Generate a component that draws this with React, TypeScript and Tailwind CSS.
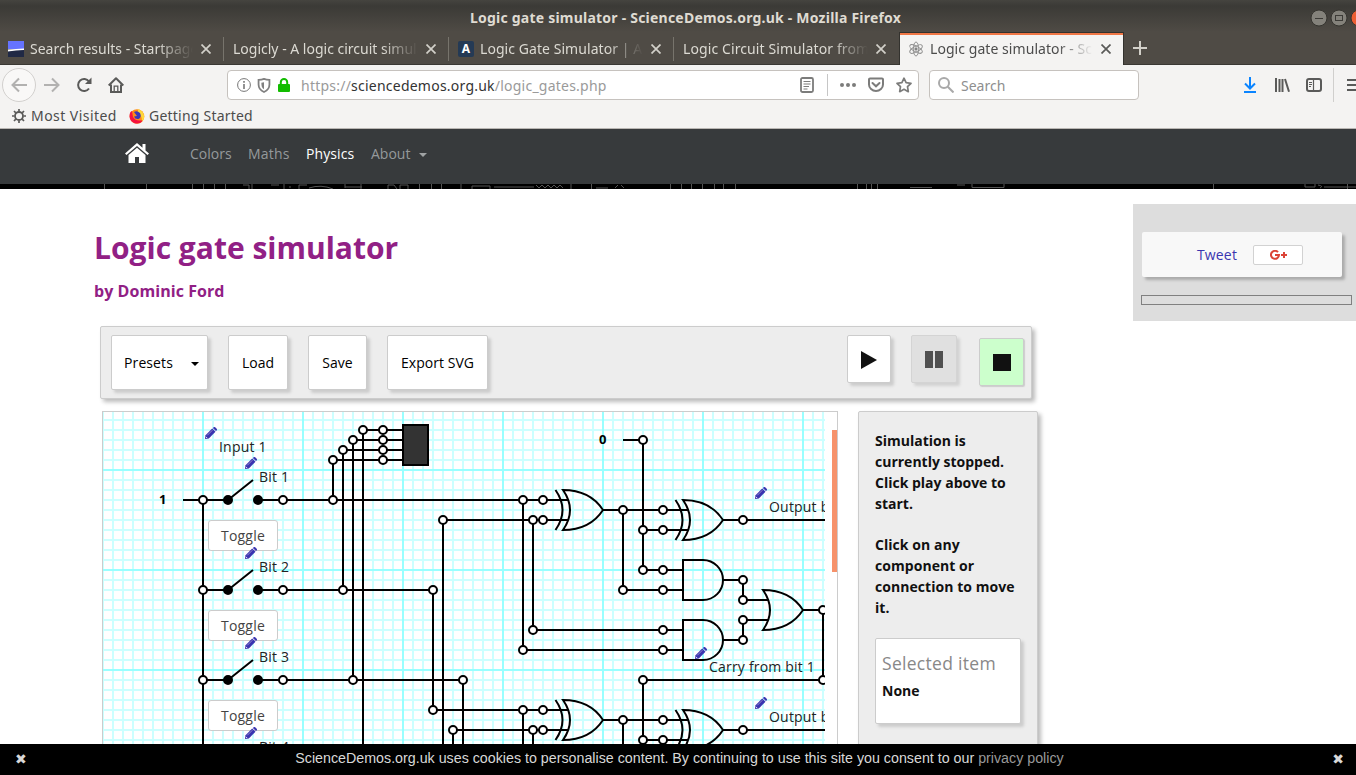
import React from "react";

const ui = "font-['Noto_Sans',sans-serif]";

type Pt = [number, number];

const WIRES = [
  "M183 500H228 M258 500H568 M203 500V744 M203 590H228 M258 590H433V710H568 M203 680H228 M258 680H463V744",
  "M228 500L253 480 M228 590L253 570 M228 680L253 660",
  "M363 744V430H403 M353 680V440H403 M343 590V450H403 M333 500V460H403",
  "M443 744V520H568 M523 500V650H683 M533 520V630H683",
  "M453 744V730H568 M523 710V744 M533 730V744",
  "M603 510H688 M623 510V590H683 M623 440H643V570H683 M643 530H688 M723 520H825",
  "M723 580H743V600H769 M723 640H743V620H769 M803 610H823V680H643V740H688",
  "M603 720H688 M623 720V744 M723 730H825",
];

const NODES: Pt[] = [
  [203, 500], [283, 500], [333, 500], [523, 500], [543, 500],
  [203, 590], [283, 590], [343, 590], [433, 590],
  [203, 680], [283, 680], [353, 680], [463, 680],
  [363, 430], [383, 430], [353, 440], [383, 440], [343, 450], [383, 450], [333, 460], [383, 460],
  [443, 520], [533, 520], [543, 520], [523, 650], [533, 630], [663, 630], [663, 650],
  [433, 710], [523, 710], [543, 710], [453, 730], [533, 730], [543, 730],
  [643, 440], [623, 510], [663, 510], [643, 530], [663, 530], [743, 520],
  [643, 570], [663, 570], [623, 590], [663, 590], [743, 580], [743, 600], [743, 620], [743, 640],
  [823, 610], [823, 680], [643, 680], [643, 740], [663, 740], [623, 720], [663, 720], [743, 730],
];

const DOTS: Pt[] = [[228, 500], [258, 500], [228, 590], [258, 590], [228, 680], [258, 680]];
const XORS: Pt[] = [[563, 490], [683, 500], [563, 700], [683, 710]];
const ANDS: Pt[] = [[683, 560], [683, 620]];
const PENCILS: Pt[] = [[205, 427], [245, 457], [245, 547], [245, 637], [245, 727], [755, 487], [695, 647], [755, 697]];
const LABELS: [number, number, string][] = [
  [219, 452, "Input 1"], [259, 482, "Bit 1"], [259, 572, "Bit 2"], [259, 662, "Bit 3"], [259, 752, "Bit 4"],
  [769, 512, "Output bit 1"], [709, 672, "Carry from bit 1"], [769, 722, "Output bit 2"],
];

const orPath = "M0 0Q14 20 0 40Q27 40 40 20Q27 0 0 0Z";

function Pencil() {
  return (
    <svg viewBox="0 0 12 12" className="block h-3 w-3">
      <path d="M0 12L.5 8.200L7.200 1.500L10.500 4.800L3.800 11.500Z" fill="#3a35b0" />
      <path d="M7.800 .9L8.700 .2Q9.500-.3 10.200.3L11.700 1.800Q12.300 2.500 11.800 3.200L11 4.100Z" fill="#3a35b0" />
      <path d="M2.200 8.400L7.400 3.200" stroke="#a79ad4" strokeWidth=".8" />
      <path d="M1 9.900L2.100 11" stroke="#fff" strokeWidth=".9" />
    </svg>
  );
}

function Circuit() {
  return (
    <div className="relative h-[332px] w-[722px] overflow-hidden">
      <svg viewBox="103 412 722 332" className="absolute inset-0 h-[332px] w-[722px]" fill="none">
        <g strokeWidth="2" stroke="#ccffff">
          {Array.from({ length: 73 }, (_, i) => <path key={i} d={`M${103 + i * 10} 412V744`} />)}
          {Array.from({ length: 33 }, (_, i) => <path key={i} d={`M103 ${420 + i * 10}H825`} />)}
        </g>
        <path strokeWidth="2" stroke="#99ffff" d="M203 412V744M303 412V744M403 412V744M503 412V744M603 412V744M703 412V744M803 412V744M103 470H825M103 570H825M103 670H825" />
        <g stroke="#000" strokeWidth="2">
          {WIRES.map((d) => <path key={d} d={d} />)}
          {XORS.map(([x, y]) => (
            <g key={`${x}-${y}`} transform={`translate(${x} ${y})`}>
              <path d={orPath} />
              <path d="M-7.500 0Q6.500 20 -7.500 40" />
            </g>
          ))}
          <path d={orPath} transform="translate(763 590)" />
          {ANDS.map(([x, y]) => <path key={y} d={`M${x} ${y}h20a20 20 0 0 1 0 40h-20z`} />)}
          <rect x="403" y="425" width="25" height="40" fill="#333" />
          {NODES.map(([x, y]) => <circle key={`${x}-${y}`} cx={x} cy={y} r="4" fill="#fff" />)}
          {DOTS.map(([x, y]) => <circle key={`${x}-${y}`} cx={x} cy={y} r="4" fill="#000" />)}
        </g>
        <g fill="#222" className="font-['Open_Sans',sans-serif] text-[14px] tracking-[0.2px]">
          {LABELS.map(([x, y, t]) => <text key={t} x={x} y={y}>{t}</text>)}
        </g>
        <g fill="#000" className="font-['Open_Sans',sans-serif] text-[13px] font-bold">
          <text x="159" y="504">1</text>
          <text x="599" y="444">0</text>
        </g>
      </svg>
      {[520, 610, 700].map((y) => (
        <button key={y} className="absolute left-[105px] h-[31px] w-[70px] rounded-[3px] border border-[#ccc] bg-white text-[14px] leading-[29px] tracking-[0.2px] text-[#444]" style={{ top: y - 412 }}>
          Toggle
        </button>
      ))}
      {PENCILS.map(([x, y]) => (
        <div key={`${x}-${y}`} className="absolute" style={{ left: x - 103, top: y - 412 }}><Pencil /></div>
      ))}
    </div>
  );
}

function CloseX({ color }: { color: string }) {
  return (
    <svg viewBox="0 0 10 10" className="ml-[8px] h-[10px] w-[10px] shrink-0" stroke={color} strokeWidth="1.7">
      <path d="M.5.5L9.500 9.500M9.500.5L.5 9.500" />
    </svg>
  );
}

function Tab({ title, icon, active, spacing, last }: { title: string; icon?: React.ReactNode; active?: boolean; spacing: string; last?: boolean }) {
  return (
    <div className={`relative flex h-[33px] w-[225px] shrink-0 items-center pl-[8px] ${active ? "-ml-px border-x border-[#33322e] bg-[#f4f3f2] pr-[12px]" : "border-b border-[#3a3833] pr-[14px] pt-px"}`}>
      {active && <div className="absolute inset-x-0 top-0 h-[3px] border-t border-[#33322e] bg-[#f07746]" />}
      {icon && <div className="mr-[6px] h-4 w-4 shrink-0">{icon}</div>}
      <div className={`min-w-0 flex-1 overflow-hidden whitespace-nowrap pt-px text-[14px] leading-[22px] [mask-image:linear-gradient(to_left,transparent,black_36px)] ${spacing} ${active ? "text-[#4c4c4c]" : "text-[#dcdad3]"}`}>{title}</div>
      <CloseX color={active ? "#5a5a58" : "#d2d0c9"} />
      {!active && !last && <div className="absolute right-px top-[5px] h-6 w-px bg-[#77746c]" />}
    </div>
  );
}

function Atom() {
  return (
    <svg viewBox="0 0 16 16" className="h-4 w-4" fill="none" stroke="#8c8c8c" strokeWidth=".9">
      <ellipse cx="8" cy="8" rx="2.700" ry="7" />
      <ellipse cx="8" cy="8" rx="2.700" ry="7" transform="rotate(60 8 8)" />
      <ellipse cx="8" cy="8" rx="2.700" ry="7" transform="rotate(-60 8 8)" />
      <circle cx="8" cy="8" r="1.200" fill="#777" />
    </svg>
  );
}

function BrowserChrome() {
  return (
    <div className={ui}>
      <div className="flex h-8 items-center bg-[linear-gradient(#45443f_0,#3b3a36_6px,#4f4b45_32px)]">
        <div className="w-[470px] shrink-0" />
        <div className="w-[840px] whitespace-nowrap pt-[3px] text-[14px] font-bold leading-5 tracking-[0.22px] text-[#dfdbd2]">Logic gate simulator - ScienceDemos.org.uk - Mozilla Firefox</div>
        <svg viewBox="0 0 46 18" className="mb-[5px] h-[18px] w-[46px] shrink-0 self-end" fill="none">
          <circle cx="9" cy="9" r="8" fill="#84827b" stroke="#35342f" />
          <path d="M5 9.500h8" stroke="#3c3b37" />
          <circle cx="29" cy="9" r="8" fill="#84827b" stroke="#35342f" />
          <rect x="25.500" y="6.500" width="7" height="5" stroke="#3c3b37" />
          <circle cx="49" cy="9" r="8" fill="#ec5e33" stroke="#35342f" />
        </svg>
      </div>
      <div className="flex h-[33px] bg-[#4f4b45]">
        <div className="flex w-full">
          <Tab title="Search results - Startpage" spacing="tracking-[0px]" icon={
            <svg viewBox="0 0 16 16" className="h-4 w-4"><path fill="#6573ff" d="M0 0h16v8H0z" /><path fill="#fff" d="M0 8.500L16 7.500v2L0 11z" /><path fill="#202945" d="M0 10.500Q8 9 16 9v7H0z" /></svg>
          } />
          <Tab title="Logicly - A logic circuit simulator" spacing="tracking-[0px]" />
          <Tab title="Logic Gate Simulator | Academo" spacing="tracking-[0.06px]" icon={
            <div className="flex h-4 w-4 items-center justify-center rounded-[2px] bg-[#243a55] text-[12px] font-bold leading-none text-white">A</div>
          } />
          <Tab title="Logic Circuit Simulator from" spacing="tracking-[0.1px]" last />
          <Tab title="Logic gate simulator - Science" spacing="tracking-[0.06px]" active icon={<Atom />} />
          <div className="flex flex-1 items-center border-b border-[#3a3833] pl-[9px]">
            <svg viewBox="0 0 14 14" className="h-[14px] w-[14px]" stroke="#d2d0c9" strokeWidth="2"><path d="M7 0v14M0 7h14" /></svg>
          </div>
        </div>
      </div>
      <div className="flex h-10 items-center overflow-hidden bg-[#f4f3f2]">
        <div className="ml-[2px] flex h-[34px] w-[34px] shrink-0 items-center justify-center rounded-full border border-[#d2d0ce] bg-[#f9f8f7]">
          <svg viewBox="0 0 16 16" className="h-4 w-4" fill="none" stroke="#b2b1b0" strokeWidth="2"><path d="M16 8H1.500M8 1.500L1.500 8L8 14.500" /></svg>
        </div>
        <svg viewBox="0 0 16 16" className="ml-[8px] h-4 w-4 shrink-0" fill="none" stroke="#b2b1b0" strokeWidth="2"><path d="M0 8h14.500M8 1.500L14.500 8L8 14.500" /></svg>
        <svg viewBox="0 0 16 16" className="ml-[16px] h-4 w-4 shrink-0" fill="none" stroke="#5a5a59" strokeWidth="2"><path d="M13 11.500A6 6 0 1 1 13 4.500" /><path d="M15.500.5V7H9z" fill="#5a5a59" stroke="none" /></svg>
        <svg viewBox="0 0 16 16" className="ml-[16px] h-4 w-4 shrink-0" fill="none" stroke="#5a5a59" strokeWidth="2"><path d="M.7 8.500L8 1.300L15.300 8.500" strokeLinejoin="round" /><path d="M3 7.500V15H13V7.500" /><path d="M6.200 14V9.200h3.600V14" strokeWidth="1.300" /></svg>
        <div className="ml-[103px] flex h-[30px] w-[692px] shrink-0 items-center rounded-[4px] border border-[#c6c2be] bg-white pl-[9px]">
          <svg viewBox="0 0 14 14" className="h-[14px] w-[14px] shrink-0" fill="none" stroke="#777"><circle cx="7" cy="7" r="6.400" /><path d="M7 6v5M7 3v1.800" strokeWidth="1.600" /></svg>
          <svg viewBox="0 0 14 16" className="ml-[6px] h-[15px] w-[14px] shrink-0" fill="none" stroke="#808080" strokeWidth="1.900"><path d="M7 1C4.500 2 3 2 1.200 2V7c0 4 2.500 6.500 5.800 8c3.300-1.500 5.800-4 5.800-8V2C11 2 9.500 2 7 1z" /><path d="M7 4.500V12C4.800 10.500 4.200 9 4.200 5z" fill="#808080" stroke="none" /></svg>
          <svg viewBox="0 0 12 14" className="ml-[7px] h-[14px] w-3 shrink-0" fill="none"><path d="M2.800 7V4.200a3.200 3.200 0 0 1 6.400 0V7" stroke="#12bc00" strokeWidth="2" /><rect y="6" width="12" height="8" rx="1" fill="#12bc00" /></svg>
          <div className="ml-[11px] w-[499px] whitespace-nowrap text-[14px] tracking-[0.23px] text-[#9a9a9a]">https://<span className="text-[#333]">sciencedemos.org.uk</span>/logic_gates.php</div>
          <svg viewBox="0 0 14 16" className="h-4 w-[14px] shrink-0" fill="none" stroke="#7c7c7b" strokeWidth="1.800"><rect x="1" y="1" width="12" height="14" rx="1.500" /><path d="M3.500 4.500h7M3.500 7h7M3.500 9.500h5.500M3.500 12h4" strokeWidth="1" /></svg>
          <div className="ml-[13px] h-[22px] w-px shrink-0 bg-[#c6c6c6]" />
          <svg viewBox="0 0 16 4" className="ml-[12px] h-1 w-4 shrink-0" fill="#7c7c7b"><circle cx="2" cy="2" r="2" /><circle cx="8" cy="2" r="2" /><circle cx="14" cy="2" r="2" /></svg>
          <svg viewBox="0 0 16 16" className="ml-[12px] h-4 w-4 shrink-0" fill="none" stroke="#7c7c7b" strokeWidth="2"><path d="M2 1.500H14a1 1 0 0 1 1 1V7.500A7 6.500 0 0 1 1 7.500V2.500a1 1 0 0 1 1-1z" /><path d="M4.500 6L8 9.300L11.500 6" strokeLinecap="round" /></svg>
          <svg viewBox="0 0 16 16" className="ml-[12px] h-4 w-4 shrink-0" fill="none" stroke="#7c7c7b" strokeWidth="1.700" strokeLinejoin="round"><path d="M8 1.200L10.100 5.600L15 6.300L11.500 9.700L12.300 14.700L8 12.300L3.700 14.700L4.500 9.700L1 6.300L5.900 5.600Z" /></svg>
        </div>
        <div className="ml-[10px] flex h-[30px] w-[210px] shrink-0 items-center rounded-[4px] border border-[#c6c2be] bg-white pl-[8px]">
          <svg viewBox="0 0 16 16" className="h-4 w-4" fill="none" stroke="#a9a9a9" strokeWidth="2"><circle cx="6" cy="6" r="5" /><path d="M9.800 9.800L15.500 15.500" /></svg>
          <span className="ml-[7px] text-[14px] text-[#8e8e8e]">Search</span>
        </div>
        <svg viewBox="0 0 12 16" className="ml-[105px] h-4 w-3 shrink-0" fill="none" stroke="#0a84ff" strokeWidth="2"><path d="M6 0v11M1 6.500l5 5l5-5M0 15h12" /></svg>
        <svg viewBox="0 0 16 14" className="ml-[18px] h-[14px] w-4 shrink-0" fill="none" stroke="#5a5a59" strokeWidth="2"><path d="M2 0v14M5.500 1v13M8.500 1v13M11 1L15 13.700" /></svg>
        <svg viewBox="0 0 16 14" className="ml-[16px] h-[14px] w-4 shrink-0" fill="none" stroke="#5a5a59" strokeWidth="2"><rect x="1" y="1" width="14" height="12" rx="2" /><path d="M7.500 1v12" strokeWidth="1.200" /><path d="M3 4.500h3M3 6.500h3M3 8.500h2" strokeWidth="1" /></svg>
        <div className="ml-[11px] h-[34px] w-px shrink-0 bg-[#d0cfcd]" />
        <svg viewBox="0 0 10 14" className="ml-[13px] h-[14px] w-[10px] shrink-0" stroke="#5a5a59" strokeWidth="2"><path d="M0 2h10M0 7h10M0 12h10" /></svg>
      </div>
      <div className="flex h-6 items-start border-b border-[#b9b6b3] bg-[#f4f3f2] text-[14px] leading-[22px] text-[#4c4c4c]">
        <svg viewBox="0 0 14 14" className="ml-3 mt-1 h-[14px] w-[14px] shrink-0" fill="none" stroke="#5a5a59"><circle cx="7" cy="7" r="4" strokeWidth="1.800" /><path strokeWidth="1.700" d="M7 0v2.500M7 11.500V14M0 7h2.500M11.500 7H14M2 2l1.800 1.800M10.200 10.200L12 12M2 12l1.800-1.800M10.200 3.800L12 2" /></svg>
        <span className="ml-[5px] w-[86px] whitespace-nowrap tracking-[0.45px]">Most Visited</span>
        <svg viewBox="0 0 16 16" className="ml-[12px] mt-[3px] h-4 w-4 shrink-0"><circle cx="8" cy="8.500" r="7.300" fill="#ff8a16" /><path d="M1 5Q-1 12 5 15Q11 17 14 12Q7 14 4 9L3 3Q1 4 1 5z" fill="#f5123f" /><path d="M9 1Q15 3 15.300 9Q15 12 13 13Q13 7 9 5z" fill="#ffd83a" /><path d="M5 4Q8 2 11 5Q13 9 9.500 11Q6 11.500 5 8.500L8 8z" fill="#3a37b8" /></svg>
        <span className="ml-[4px] whitespace-nowrap tracking-[0.22px]">Getting Started</span>
      </div>
    </div>
  );
}

function SiteNav() {
  return (
    <>
      <nav className="flex h-[55px] items-start bg-[#373a3c] pt-[14px] text-[14px] leading-[22px] text-[#95999b]">
        <svg viewBox="0 0 24 20" className="ml-[125px] mr-[41px] h-5 w-6" fill="#fff"><path d="M12 0L0 10.500L1.500 12L12 3L22.500 12L24 10.500L20.500 7.400V1H17.500V4.800Z" /><path d="M3.500 12L12 4.800L20.500 12V20H14V14H10V20H3.500Z" /></svg>
        <span className="w-[58px]">Colors</span>
        <span className="w-[58px] tracking-[0.2px]">Maths</span>
        <span className="w-[65px] tracking-[0.1px] text-white">Physics</span>
        <span>About</span>
        <span className="ml-[9px] mt-[10px] border-x-4 border-t-4 border-x-transparent border-t-[#a0a3a4]" />
      </nav>
      <svg viewBox="0 0 1356 5" className="block h-[5px] w-full bg-black" fill="none" stroke="#555" preserveAspectRatio="none">
        <path d="M104.500 0v5M146.500 0v5M192.500 0v5M203.500 0v5M214.500 0v5M225.500 0v5M243 1h6v4M252 0v5M271 1h8M284 0v5M289 3h2M299 5V1h8M309 4q12-4 24 1M345 4V0M345 3h17M361 0v5M388 5V1h6l3 4M400 5V1h8v4M419.500 0v5M431.500 0v5M441.500 0v5M461 0v5M472 5V2h18v3M494 3h40M536 1l3 3l3-3l3 3l3-3l3 3l3-3l3 3l3-3l3 3M571 0v5M591.500 0v5M596 4h12M615 4l3-3M621 1l3 3M670.500 0v5M681.500 0v5M691.500 0v5M702.500 0v5M714.500 0v5M723.500 0v5M735.500 0v5M857.500 0v5M866.500 0v5M871.500 0v5M877.500 0v5M910 3.500h22M957 1h8M972 0v3.500h32V0M1213.500 0v5M1305 0v3h10V0M1318 1q6 1 2 3M1324 3h32M1347.500 0v5" />
      </svg>
    </>
  );
}

const whiteBtn = "flex items-center justify-center rounded-[2px] border border-[#ccc] bg-white text-[14px] text-black shadow-[3px_3px_3px_#ccc]";

export default function App() {
  return (
    <div className="flex h-[775px] w-full flex-col overflow-hidden bg-white font-['Open_Sans',sans-serif]">
      <BrowserChrome />
      <SiteNav />
      <div className="flex h-[555px] shrink-0 justify-between overflow-hidden">
        <main className="w-[1050px] pl-[94px]">
          <h1 className="mt-[37px] h-[44px] whitespace-nowrap text-[30px] font-bold leading-[44px] text-[#912085]">Logic gate simulator</h1>
          <h2 className="mt-[10px] h-[22px] text-[16px] font-bold leading-[22px] tracking-[0.06px] text-[#912085]">by Dominic Ford</h2>
          <div className="ml-[6px] mt-[24px] flex h-[73px] w-[932px] items-start gap-5 rounded-[2px] border border-[#ccc] bg-[#ededed] pl-[10px] pt-[8px] shadow-[3px_3px_4px_#bbb]">
            <button className={`${whiteBtn} h-[55px] w-[97px] gap-[18px] pl-[4px] tracking-[0.1px]`}>Presets<span className="mt-[3px] border-x-4 border-t-4 border-x-transparent border-t-black" /></button>
            <button className={`${whiteBtn} h-[55px] w-[60px]`}>Load</button>
            <button className={`${whiteBtn} h-[55px] w-[59px]`}>Save</button>
            <button className={`${whiteBtn} h-[55px] w-[101px] tracking-[0.05px]`}>Export SVG</button>
            <button className={`${whiteBtn} ml-[339px] h-[48px] w-[44px] pt-px`}><svg viewBox="0 0 16 18" className="h-[18px] w-4" fill="#111"><path d="M0 0L16 9L0 18Z" /></svg></button>
            <button className="flex h-[48px] w-[46px] items-center justify-center rounded-[2px] border border-[#d4d4d4] bg-[#e0e0e0] shadow-[3px_3px_3px_#d2d2d2]"><svg viewBox="0 0 18 17" className="h-[17px] w-[18px]" fill="#505050"><path d="M0 0h8v17H0zM10 0h8v17h-8z" /></svg></button>
            <button className="ml-[2px] mt-[3px] flex h-[48px] w-[45px] items-center justify-center rounded-[2px] border border-[#ccc] bg-[#ccffcc] shadow-[1px_1px_1px_#ccc]"><span className="h-[17px] w-[18px] bg-[#111]" /></button>
          </div>
          <div className="mt-[12px] flex items-start pl-[8px]">
            <div className="flex h-[345px] w-[736px] justify-between border border-[#ccc] bg-white">
              <Circuit />
              <div className="mt-[18px] h-[142px] w-[5px] bg-[#f6926b]" />
            </div>
            <div className="ml-[20px] h-[345px] w-[180px] rounded-[2px] border border-[#ccc] bg-[#ededed] pl-4 pr-4 pt-[18px] text-[14px] font-bold leading-[21px] text-[#111] shadow-[3px_3px_4px_#bbb]">
              <p className="whitespace-nowrap">Simulation is<br />currently stopped.<br />Click play above to<br />start.</p>
              <p className="mt-[20px] whitespace-nowrap tracking-[0.05px]">Click on any<br />component or<br />connection to move<br />it.</p>
              <div className="mt-[20px] h-[86px] w-[146px] rounded-[2px] border border-[#ccc] bg-white pl-[6px] pt-[11px] shadow-[3px_3px_3px_#ccc]">
                <div className="whitespace-nowrap text-[17.5px] font-normal leading-[26px] tracking-[0.3px] text-[#888]">Selected item</div>
                <div className="mt-[4px]">None</div>
              </div>
            </div>
          </div>
        </main>
        <aside className="mt-[15px] h-[117px] w-[223px] bg-[#ddd] pl-[8px] pt-[28px]">
          <div className="ml-[1px] flex h-[45px] w-[200px] items-center rounded-[2px] bg-[#f8f8f8] pl-[55px] shadow-[3px_3px_3px_#aaa]">
            <span className="w-[40px] text-[14px] tracking-[0.15px] text-[#3a35b0]">Tweet</span>
            <div className="ml-[16px] flex h-5 w-[50px] items-center justify-center rounded-[2px] border border-[#d2d2d2] bg-white">
              <svg viewBox="0 0 17 10" className="h-[10px] w-[17px]" fill="none" stroke="#db4437" strokeWidth="2"><path d="M8 2.200A4 4 0 1 0 9 5H5" /><path d="M11 5h6M14 2v6" /></svg>
            </div>
          </div>
          <div className="mt-[18px] h-[10px] w-[211px] border border-[#808080]" />
        </aside>
      </div>
      <footer className="flex h-[31px] shrink-0 items-center justify-between bg-black pl-[15px] pr-[12px] font-['Liberation_Sans',sans-serif] text-[14.25px] leading-[28px] text-[#d8d8d8]">
        <span className="pb-[2px] font-['DejaVu_Sans',sans-serif] text-[14px]">✖</span>
        <span className="whitespace-nowrap pb-[3px]">ScienceDemos.org.uk uses cookies to personalise content. By continuing to use this site you consent to our <span className="text-[#999]">privacy policy</span></span>
        <span className="pb-[2px] font-['DejaVu_Sans',sans-serif] text-[14px]">✖</span>
      </footer>
    </div>
  );
}
